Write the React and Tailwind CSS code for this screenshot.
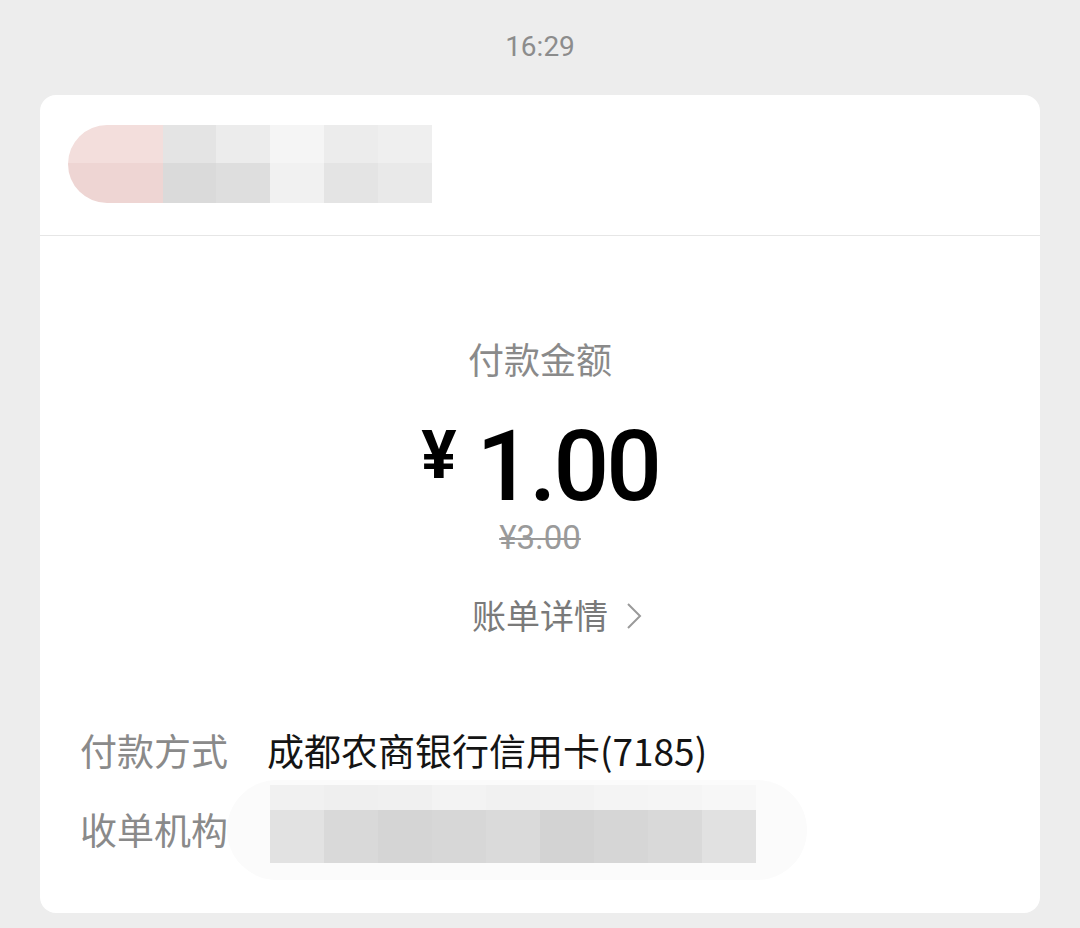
import React from "react";

const cjk = {
  fontFamily: '"Noto Sans CJK SC", "Noto Sans", sans-serif',
};
const num = { fontFamily: 'Roboto, "Noto Sans CJK SC", sans-serif' };

// mosaic tiles over the merchant name
const headerTop = ["#f3dedc", "#e4e4e4", "#ececec", "#f5f5f5", "#ececec", "#efefef"];
const headerBottom = ["#eed5d3", "#dadada", "#dedede", "#f1f1f1", "#e4e4e4", "#e9e9e9"];
const orgTop = ["#f1f1f1", "#efefef", "#f0f0f0", "#f3f3f3", "#f1f1f1", "#f2f2f2", "#f4f4f4", "#f5f5f5", "#f7f7f7"];
const orgBottom = ["#e2e2e2", "#d9d9d9", "#d5d5d5", "#d7d7d7", "#dadada", "#d3d3d3", "#d6d6d6", "#d9d9d9", "#e1e1e1"];

function Mosaic({ top, bottom, widths, topH, bottomH, className }) {
  return (
    <div className={"flex flex-col " + className}>
      <div className="flex">
        {top.map((c, i) => (
          <div key={i} style={{ background: c, width: widths[i], height: topH }} />
        ))}
      </div>
      <div className="flex">
        {bottom.map((c, i) => (
          <div key={i} style={{ background: c, width: widths[i], height: bottomH }} />
        ))}
      </div>
    </div>
  );
}

export default function App() {
  return (
    <div className="w-[1080px] h-[928px] bg-[#ededed] overflow-hidden" style={cjk}>
      {/* 时间 */}
      <div className="h-[95px] pt-[29px] text-center text-[28px] leading-[36px] text-[#8c8c8c]" style={num}>
        16:29
      </div>

      <div className="mx-[40px] bg-white rounded-[16px] h-[818px]">
        {/* 商户头部（已打码） */}
        <div className="h-[141px] border-b border-[#e6e6e6] flex items-center pl-[28px]">
          <Mosaic
            top={headerTop}
            bottom={headerBottom}
            widths={[95, 53, 54, 54, 54, 54]}
            topH={38}
            bottomH={40}
            className="rounded-l-full rounded-r-[24px] overflow-hidden -mt-[2px]"
          />
        </div>

        {/* 金额 */}
        <div className="text-center">
          <div className="mt-[98px] text-[36px] leading-[48px] text-[#8a8a8a]">付款金额</div>
          <div className="mt-[31px] text-[98px] leading-[107px] font-medium text-black tracking-[-3px]" style={num}>
            <span className="text-[66px] leading-none font-bold align-[22px] mr-[20px] tracking-normal">¥</span>
            1.00
          </div>
          <div className="text-[33px] leading-[36px] text-[#9a9a9a] line-through decoration-[2px]" style={num}>
            ¥3.00
          </div>
          <div className="mt-[35px] h-[48px] grid grid-cols-[1fr_auto_1fr] items-center text-[34px] leading-[48px] text-[#7a7a7a]">
            <span />
            <span>账单详情</span>
            <svg className="ml-[18px] mt-[2px]" width="16" height="28" viewBox="0 0 16 28" fill="none">
              <path d="M2 2 L14 14 L2 26" stroke="#9a9a9a" strokeWidth="2" />
            </svg>
          </div>
        </div>

        {/* 明细 */}
        <div className="mt-[84px] pl-[40px] flex flex-col gap-[23px]">
          <div className="flex items-center h-[56px]">
            <span className="w-[187px] shrink-0 text-[37px] text-[#8a8a8a]">付款方式</span>
            <span className="text-[37px] text-[#141414]">成都农商银行信用卡(7185)</span>
          </div>
          <div className="flex items-center h-[56px]">
            <span className="w-[187px] shrink-0 text-[37px] text-[#8a8a8a]">收单机构</span>
            <div className="relative h-[56px] flex-1">
              <div className="absolute left-[-40px] top-[-22px] w-[580px] h-[100px] rounded-full bg-[#fbfbfb]" />
              <Mosaic
                top={orgTop}
                bottom={orgBottom}
                widths={[54, 54, 54, 54, 54, 54, 54, 54, 54]}
                topH={25}
                bottomH={53}
                className="absolute left-[3px] top-[-17px]"
              />
            </div>
          </div>
        </div>
      </div>
    </div>
  );
}
